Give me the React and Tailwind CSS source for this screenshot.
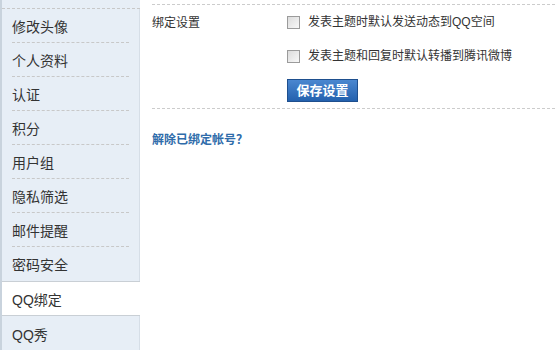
import React from "react";

const menu = [
  "修改头像",
  "个人资料",
  "认证",
  "积分",
  "用户组",
  "隐私筛选",
  "邮件提醒",
  "密码安全",
  "QQ绑定",
  "QQ秀",
];

const font = { fontFamily: '"Liberation Sans", "Noto Sans CJK SC", sans-serif' };

function Checkbox() {
  return (
    <span className="inline-block w-[13px] h-[13px] border border-[#9b9b9b] bg-gradient-to-br from-[#dcdcdc] to-[#f8f8f8] shrink-0" />
  );
}

export default function App() {
  const active = "QQ绑定";

  return (
    <div
      className="flex w-[555px] h-[350px] overflow-hidden bg-white text-[#333]"
      style={font}
    >
      {/* Sidebar */}
      <div className="w-[140px] shrink-0 bg-[#e7eef6] border-l-2 border-[#c9d3dd] flex flex-col">
        <div className="h-[11px] border-b border-dashed border-[#c8c8c8]" />
        {menu.map((item, i) => {
          const isActive = item === active;
          const nextActive = menu[i + 1] === active;
          if (isActive) {
            return (
              <div
                key={item}
                className="h-[35px] shrink-0 bg-white border-y border-[#c9cfd5] flex items-center pl-[10px] pt-[3px] text-[14px]"
              >
                {item}
              </div>
            );
          }
          return (
            <div
              key={item}
              className="h-[34px] shrink-0 flex flex-col border-r border-[#d6dee7]"
            >
              <div className="flex-1 flex items-center pl-[10px] pt-[4px] text-[14px]">
                {item}
              </div>
              {!nextActive && i < menu.length - 1 && (
                <div className="mx-[10px] border-b border-dashed border-[#c8c8c8]" />
              )}
              {nextActive && <div className="h-px" />}
            </div>
          );
        })}
      </div>

      {/* Content */}
      <div className="flex-1 pl-[12px] pt-[4px] text-[12px]">
        <div className="border-t border-dashed border-[#cccccc] pt-[7px] pb-[6px] flex">
          <div className="w-[135px] h-[20px] flex items-center pt-[2px]">绑定设置</div>
          <div className="flex flex-col">
            <label className="h-[20px] flex items-center gap-[8px]">
              <Checkbox />
              <span>发表主题时默认发送动态到QQ空间</span>
            </label>
            <label className="h-[20px] mt-[14px] flex items-center gap-[8px]">
              <Checkbox />
              <span>发表主题和回复时默认转播到腾讯微博</span>
            </label>
            <button className="mt-[13px] w-[71px] h-[23px] bg-gradient-to-b from-[#4a87d0] to-[#2361ae] border border-[#1e4f8e] text-white font-bold text-[13px] leading-none">
              保存设置
            </button>
          </div>
        </div>
        <div className="border-t border-dashed border-[#cccccc] pt-[22px]">
          <a className="font-bold text-[#2f6caa] leading-[16px] cursor-pointer">
            解除已绑定帐号？
          </a>
        </div>
      </div>
    </div>
  );
}
